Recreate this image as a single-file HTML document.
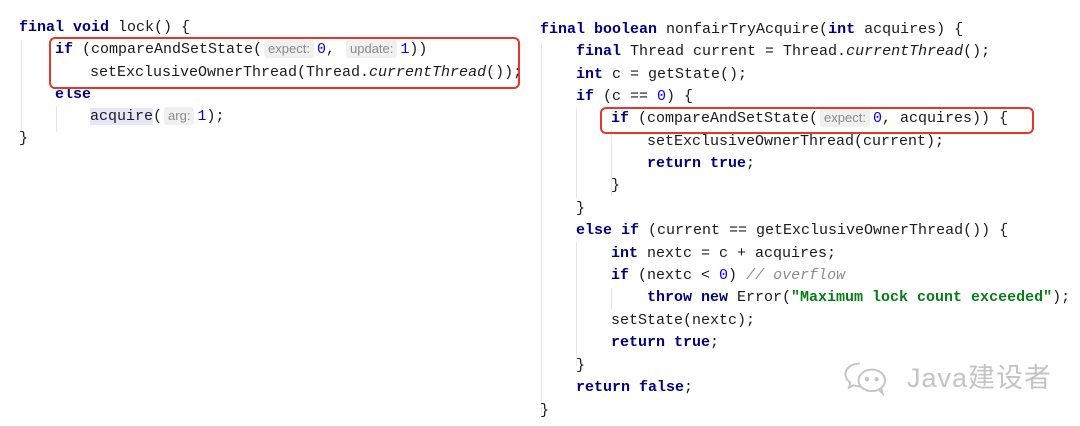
<!DOCTYPE html>
<html><head><meta charset="utf-8"><style>
body{margin:0;width:1080px;height:426px;background:#fff;overflow:hidden;position:relative;font-family:"Liberation Mono",monospace;font-size:15px;color:#1a1a1a}
.l{position:absolute;white-space:pre;height:22px;line-height:22px}
b{color:#000080;font-weight:bold}
.n{color:#0000ff}
.s{color:#067d17;font-weight:bold}
.c{color:#8c8c8c;font-style:italic}
i{font-style:italic}
.h{display:inline-block;font-family:"Liberation Sans",sans-serif;font-size:13px;color:#8a8a8a;background:#f0f0f0;border-radius:3px;padding:0 4px;line-height:18px;margin:0 3px 0 2px}
.g{position:absolute;width:1px;background:#e6e6e6}
.box{position:absolute;border:2.5px solid #e8372a;border-radius:6px}
.hl{background:#e6e6f8}
</style></head><body>
<div class="g" style="left:21px;top:40px;height:92px"></div>
<div class="g" style="left:56px;top:106px;height:26px"></div>
<div class="g" style="left:541px;top:42px;height:370px"></div>
<div class="g" style="left:576px;top:108px;height:90px"></div>
<div class="g" style="left:576px;top:242px;height:124px"></div>
<div class="g" style="left:611px;top:130px;height:66px"></div>
<div class="g" style="left:611px;top:288px;height:22px"></div>

<div class="l" style="left:19px;top:17px"><b>final void</b> lock() {</div>
<div class="l" style="left:55px;top:39px"><b>if</b> (compareAndSetState(<span class="h">expect:</span><span class="n">0</span>, <span class="h">update:</span><span class="n">1</span>))</div>
<div class="l" style="left:90px;top:62px">setExclusiveOwnerThread(Thread.<i>currentThread</i>());</div>
<div class="l" style="left:55px;top:84px"><b>else</b></div>
<div class="l" style="left:90px;top:106px"><span class="hl">acquire</span>(<span class="h">arg:</span><span class="n">1</span>);</div>
<div class="l" style="left:19px;top:128px">}</div>
<div class="box" style="left:49px;top:37px;width:467px;height:48px"></div>

<div class="l" style="left:540px;top:19px"><b>final boolean</b> nonfairTryAcquire(<b>int</b> acquires) {</div>
<div class="l" style="left:576px;top:41px"><b>final</b> Thread current = Thread.<i>currentThread</i>();</div>
<div class="l" style="left:576px;top:64px"><b>int</b> c = getState();</div>
<div class="l" style="left:576px;top:86px"><b>if</b> (c == <span class="n">0</span>) {</div>
<div class="l" style="left:611px;top:108px"><b>if</b> (compareAndSetState(<span class="h">expect:</span><span class="n">0</span>, acquires)) {</div>
<div class="l" style="left:647px;top:131px">setExclusiveOwnerThread(current);</div>
<div class="l" style="left:647px;top:153px"><b>return true</b>;</div>
<div class="l" style="left:611px;top:175px">}</div>
<div class="l" style="left:576px;top:198px">}</div>
<div class="l" style="left:576px;top:220px"><b>else if</b> (current == getExclusiveOwnerThread()) {</div>
<div class="l" style="left:611px;top:243px"><b>int</b> nextc = c + acquires;</div>
<div class="l" style="left:611px;top:265px"><b>if</b> (nextc &lt; <span class="n">0</span>) <span class="c">// overflow</span></div>
<div class="l" style="left:647px;top:287px"><b>throw new</b> Error(<span class="s">"Maximum lock count exceeded"</span>);</div>
<div class="l" style="left:611px;top:310px">setState(nextc);</div>
<div class="l" style="left:611px;top:332px"><b>return true</b>;</div>
<div class="l" style="left:576px;top:355px">}</div>
<div class="l" style="left:576px;top:377px"><b>return false</b>;</div>
<div class="l" style="left:540px;top:400px">}</div>
<div class="box" style="left:600px;top:107px;width:430px;height:23px"></div>

<svg style="position:absolute;left:843px;top:360px" width="60" height="36" viewBox="0 0 50 30" fill="none" stroke="#c4c4c4" stroke-width="1.6">
<path d="M14 3c-7 0-12 4-12 9 0 3 2 5 4 7l-1 4 4-2c2 1 4 1 6 1"/>
<ellipse cx="24" cy="17" rx="11" ry="9"/>
<path d="M30 25l3 3-1-4"/>
<circle cx="20" cy="16" r="1" fill="#c4c4c4"/><circle cx="28" cy="16" r="1" fill="#c4c4c4"/>
</svg>
<div style="position:absolute;left:907px;top:361px;font-family:'Liberation Sans','Noto Sans CJK SC',sans-serif;font-size:27px;color:#c4c4c4;line-height:34px;letter-spacing:1px">Java建设者</div>
</body></html>
